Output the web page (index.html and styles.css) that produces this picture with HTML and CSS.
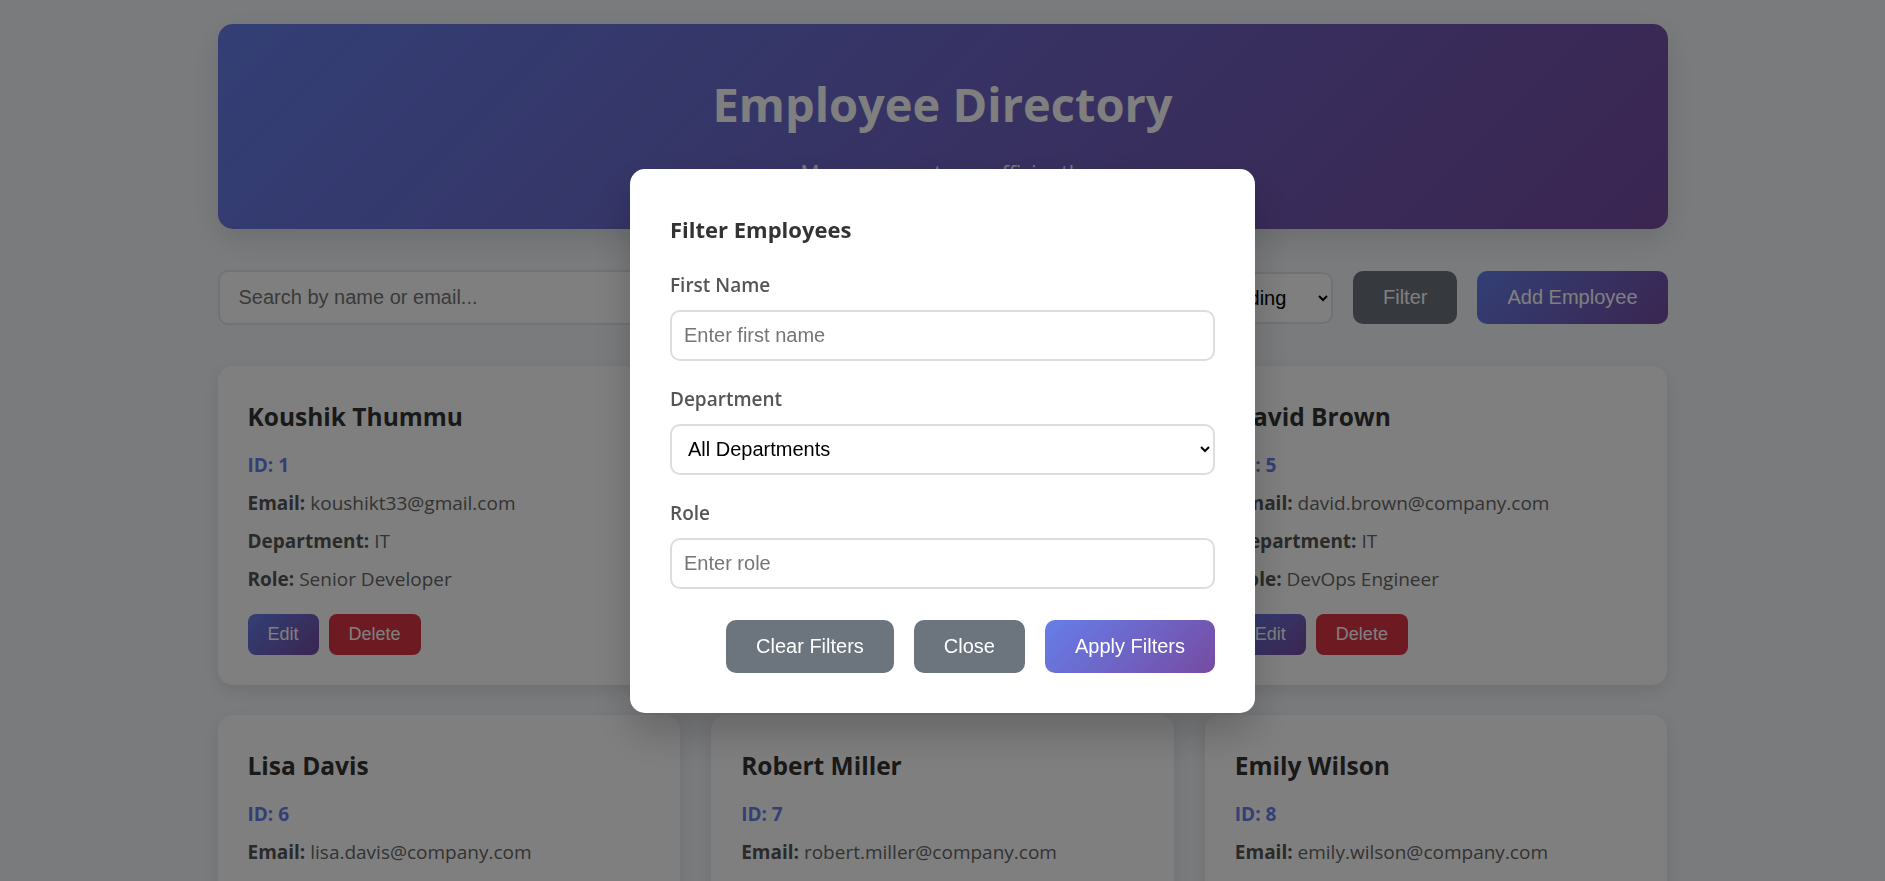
FILE: index.html
```html
<!DOCTYPE html>
<html lang="en">
<head>
<meta charset="utf-8">
<title>Employee Directory</title>
<link rel="stylesheet" href="styles.css">
</head>
<body>
<div class="container">
  <header class="header">
    <h1 class="header-title">Employee Directory</h1>
    <p class="header-sub">Manage your team efficiently</p>
  </header>

  <div class="controls">
    <input class="search" type="text" placeholder="Search by name or email...">
    <select class="sort"><option>Sort by First Name</option><option>Sort by Last Name</option></select>
    <select class="sort"><option>Ascending</option><option>Descending</option></select>
    <button class="btn btn-secondary">Filter</button>
    <button class="btn btn-primary">Add Employee</button>
  </div>

  <div class="grid">
    <div class="card">
      <h3 class="card-name">Koushik Thummu</h3>
      <p class="card-id">ID: 1</p>
      <p class="card-line"><strong>Email:</strong> koushikt33@gmail.com</p>
      <p class="card-line"><strong>Department:</strong> IT</p>
      <p class="card-line"><strong>Role:</strong> Senior Developer</p>
      <div class="card-actions">
        <button class="btn-sm btn-edit">Edit</button>
        <button class="btn-sm btn-delete">Delete</button>
      </div>
    </div>
    <div class="card">
      <h3 class="card-name">Jane Smith</h3>
      <p class="card-id">ID: 3</p>
      <p class="card-line"><strong>Email:</strong> jane.smith@company.com</p>
      <p class="card-line"><strong>Department:</strong> HR</p>
      <p class="card-line"><strong>Role:</strong> HR Manager</p>
      <div class="card-actions">
        <button class="btn-sm btn-edit">Edit</button>
        <button class="btn-sm btn-delete">Delete</button>
      </div>
    </div>
    <div class="card">
      <h3 class="card-name">David Brown</h3>
      <p class="card-id">ID: 5</p>
      <p class="card-line"><strong>Email:</strong> david.brown@company.com</p>
      <p class="card-line"><strong>Department:</strong> IT</p>
      <p class="card-line"><strong>Role:</strong> DevOps Engineer</p>
      <div class="card-actions">
        <button class="btn-sm btn-edit">Edit</button>
        <button class="btn-sm btn-delete">Delete</button>
      </div>
    </div>
    <div class="card">
      <h3 class="card-name">Lisa Davis</h3>
      <p class="card-id">ID: 6</p>
      <p class="card-line"><strong>Email:</strong> lisa.davis@company.com</p>
      <p class="card-line"><strong>Department:</strong> Marketing</p>
      <p class="card-line"><strong>Role:</strong> Marketing Specialist</p>
      <div class="card-actions">
        <button class="btn-sm btn-edit">Edit</button>
        <button class="btn-sm btn-delete">Delete</button>
      </div>
    </div>
    <div class="card">
      <h3 class="card-name">Robert Miller</h3>
      <p class="card-id">ID: 7</p>
      <p class="card-line"><strong>Email:</strong> robert.miller@company.com</p>
      <p class="card-line"><strong>Department:</strong> Finance</p>
      <p class="card-line"><strong>Role:</strong> Financial Analyst</p>
      <div class="card-actions">
        <button class="btn-sm btn-edit">Edit</button>
        <button class="btn-sm btn-delete">Delete</button>
      </div>
    </div>
    <div class="card">
      <h3 class="card-name">Emily Wilson</h3>
      <p class="card-id">ID: 8</p>
      <p class="card-line"><strong>Email:</strong> emily.wilson@company.com</p>
      <p class="card-line"><strong>Department:</strong> Sales</p>
      <p class="card-line"><strong>Role:</strong> Sales Representative</p>
      <div class="card-actions">
        <button class="btn-sm btn-edit">Edit</button>
        <button class="btn-sm btn-delete">Delete</button>
      </div>
    </div>
  </div>
</div>

<div class="overlay">
  <div class="modal">
    <h3 class="modal-title">Filter Employees</h3>
    <div class="form-group">
      <label class="form-label">First Name</label>
      <input class="form-input" type="text" placeholder="Enter first name">
    </div>
    <div class="form-group">
      <label class="form-label">Department</label>
      <select class="form-input form-select">
        <option>All Departments</option>
        <option>IT</option>
        <option>HR</option>
      </select>
    </div>
    <div class="form-group">
      <label class="form-label">Role</label>
      <input class="form-input" type="text" placeholder="Enter role">
    </div>
    <div class="modal-actions">
      <button class="btn btn-secondary">Clear Filters</button>
      <button class="btn btn-secondary">Close</button>
      <button class="btn btn-primary">Apply Filters</button>
    </div>
  </div>
</div>
</body>
</html>
```

FILE: styles.css
```css
* {
  box-sizing: border-box;
}

html, body {
  margin: 0;
  padding: 0;
}

body {
  font-family: "Open Sans", "Noto Sans", sans-serif;
  background: #f5f7fa;
  color: #333;
  padding-top: 24px;
  overflow: hidden;
  height: 881px;
}

.container {
  max-width: 1450px;
  margin: 0 auto;
}

/* Header */
.header {
  background: linear-gradient(135deg, #667eea 0%, #764ba2 100%);
  color: #fff;
  border-radius: 15px;
  padding: 50px 40px 43px;
  text-align: center;
  box-shadow: 0 10px 30px rgba(0, 0, 0, 0.12);
  margin-bottom: 41px;
}

.header-title {
  margin: 0 0 26px;
  font-size: 47px;
  line-height: 60px;
  font-weight: 700;
}

.header-sub {
  margin: 0;
  font-size: 21px;
  line-height: 26px;
  opacity: 0.9;
}

/* Controls */
.controls {
  display: flex;
  align-items: center;
  gap: 20px;
  margin-bottom: 41px;
}

.search {
  flex: 1;
  font-family: "Liberation Sans", Arial, sans-serif;
  font-size: 20px;
  padding: 14px 19px;
  border: 2px solid #e1e5e9;
  border-radius: 10px;
  background: #fff;
  color: #333;
}

.sort {
  font-family: "Liberation Sans", Arial, sans-serif;
  font-size: 20px;
  padding: 12px 16px 12px 12px;
  height: 52px;
  border: 2px solid #e1e5e9;
  border-radius: 10px;
  background: #fff;
  color: #000;
}

.btn {
  font-family: "Liberation Sans", Arial, sans-serif;
  font-size: 20px;
  line-height: 23px;
  padding: 15px 30px;
  border: none;
  border-radius: 10px;
  color: #fff;
  cursor: pointer;
}

.btn-primary {
  background: linear-gradient(135deg, #667eea 0%, #764ba2 100%);
}

.btn-secondary {
  background: #6c757d;
}

/* Cards */
.grid {
  display: grid;
  grid-template-columns: repeat(3, 1fr);
  gap: 30px 31px;
}

.card {
  background: #fff;
  border-radius: 15px;
  padding: 30px;
  box-shadow: 0 6px 18px rgba(0, 0, 0, 0.1);
}

.card-name {
  margin: 4px 0 17px;
  font-size: 24.5px;
  line-height: 34px;
  font-weight: 700;
  color: #333;
}

.card-id,
.card-line {
  margin: 0 0 10px;
  font-size: 19px;
  line-height: 28px;
  color: #666;
}

.card-id {
  color: #667eea;
  font-weight: 700;
}

.card-line strong {
  color: #555;
  font-weight: 700;
}

.card-actions {
  display: flex;
  gap: 10px;
  margin-top: 21px;
}

.btn-sm {
  font-family: "Liberation Sans", Arial, sans-serif;
  font-size: 18px;
  line-height: 21px;
  padding: 10px 20px;
  border: none;
  border-radius: 8px;
  color: #fff;
  cursor: pointer;
}

.btn-edit {
  background: linear-gradient(135deg, #667eea 0%, #764ba2 100%);
}

.btn-delete {
  background: #dc3545;
}

/* Modal */
.overlay {
  position: fixed;
  inset: 0;
  background: rgba(0, 0, 0, 0.5);
  display: flex;
  align-items: center;
  justify-content: center;
}

.modal {
  width: 625px;
  background: #fff;
  border-radius: 15px;
  padding: 40px 40px 40px;
  box-shadow: 0 20px 40px rgba(0, 0, 0, 0.2);
}

.modal-title {
  margin: 5px 0 26px;
  font-size: 22px;
  line-height: 30px;
  font-weight: 700;
  color: #333;
}

.form-group {
  margin-bottom: 23px;
}

.form-label {
  display: block;
  padding-top: 2px;
  margin-bottom: 11px;
  font-size: 19px;
  line-height: 27px;
  font-weight: 600;
  color: #555;
}

.form-input {
  display: block;
  width: 100%;
  font-family: "Liberation Sans", Arial, sans-serif;
  font-size: 20px;
  line-height: 23px;
  padding: 12px;
  border: 2px solid #ddd;
  border-radius: 10px;
  background: #fff;
  color: #000;
}

.form-select {
  height: 51px;
  padding: 0 12px;
}

.modal-actions {
  display: flex;
  justify-content: flex-end;
  gap: 20px;
  margin-top: 31px;
}
```
